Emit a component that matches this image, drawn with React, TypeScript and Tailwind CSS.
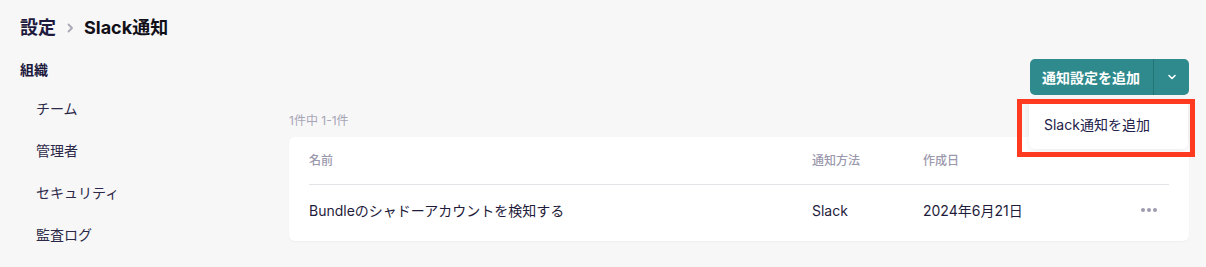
import React from "react";

const font = { fontFamily: '"Inter", "Noto Sans CJK JP", sans-serif' };

export default function App() {
  const nav = ["チーム", "管理者", "セキュリティ", "監査ログ"];
  return (
    <div
      className="w-[1206px] h-[267px] bg-[#f7f7f8] overflow-hidden pl-5 pr-[17px] pt-[17px] text-[#1f1c3b]"
      style={font}
    >
      <div className="flex items-center h-[22px] text-[18px] font-bold leading-[22px]">
        <span className="text-[#1e1a3e]">設定</span>
        <svg width="20" height="20" viewBox="0 0 20 20" className="mx-[4px]">
          <path d="M8.5 6.5 L12 10 L8.5 13.5" fill="none" stroke="#a9a8b6" strokeWidth="1.8" strokeLinecap="round" strokeLinejoin="round" />
        </svg>
        <span className="text-[#111018]">Slack通知</span>
      </div>
      <div className="flex mt-[20px]">
        <div className="w-[269px] shrink-0">
          <div className="mt-[1px] h-5 leading-5 text-[14px] font-bold text-[#1e1a3e]">組織</div>
          <div className="mt-[7px] pl-4">
            {nav.map((n) => (
              <div key={n} className="h-[42px] flex items-center text-[14px] text-[#2c2948]">
                {n}
              </div>
            ))}
          </div>
        </div>
        <div className="flex-1 min-w-0">
          <div className="flex justify-end relative">
            <div className="flex h-9 rounded-[5px] bg-[#2e8a8c] text-white">
              <div className="flex items-center pl-3 pr-[13px] text-[14px] font-bold">通知設定を追加</div>
              <div className="w-px bg-[#247375]" />
              <div className="w-[35px] flex items-center justify-center">
                <svg width="12" height="12" viewBox="0 0 12 12">
                  <path d="M3 4.5 L6 7.5 L9 4.5" fill="none" stroke="#ffffff" strokeWidth="1.6" strokeLinecap="round" strokeLinejoin="round" />
                </svg>
              </div>
            </div>
            <div className="absolute right-[1px] top-[40px] w-[159px] h-[50px] bg-white rounded-[6px] shadow-[0_2px_6px_rgba(0,0,0,0.08)] flex items-center pl-[15px] text-[14px] text-[#24214a] z-10">
              Slack通知を追加
            </div>
            <div className="absolute right-[-6px] top-[40px] w-[178px] h-[58px] border-[5px] border-[#fe3b20] z-20 pointer-events-none" />
          </div>
          <div className="mt-[20px] h-[12px] flex items-center text-[12px] text-[#a6a4b5]">1件中 1-1件</div>
          <div className="mt-[10px] bg-white rounded-[6px] shadow-[0_1px_2px_rgba(0,0,0,0.04)] px-5 pb-[6px]">
            <div className="flex items-center h-12 border-b border-[#e3e3e8] text-[12px] font-medium text-[#9b99ad]">
              <div className="w-[503px]">名前</div>
              <div className="w-[111px]">通知方法</div>
              <div className="flex-1">作成日</div>
            </div>
            <div className="flex items-center h-[50px] text-[14px] text-[#1f1c3b]">
              <div className="w-[503px]">Bundleのシャドーアカウントを検知する</div>
              <div className="w-[111px]">Slack</div>
              <div className="flex-1">2024年6月21日</div>
              <div className="flex gap-[2px] pr-3">
                <span className="w-1 h-1 rounded-full bg-[#9d9baf]" />
                <span className="w-1 h-1 rounded-full bg-[#9d9baf]" />
                <span className="w-1 h-1 rounded-full bg-[#9d9baf]" />
              </div>
            </div>
          </div>
        </div>
      </div>
    </div>
  );
}
